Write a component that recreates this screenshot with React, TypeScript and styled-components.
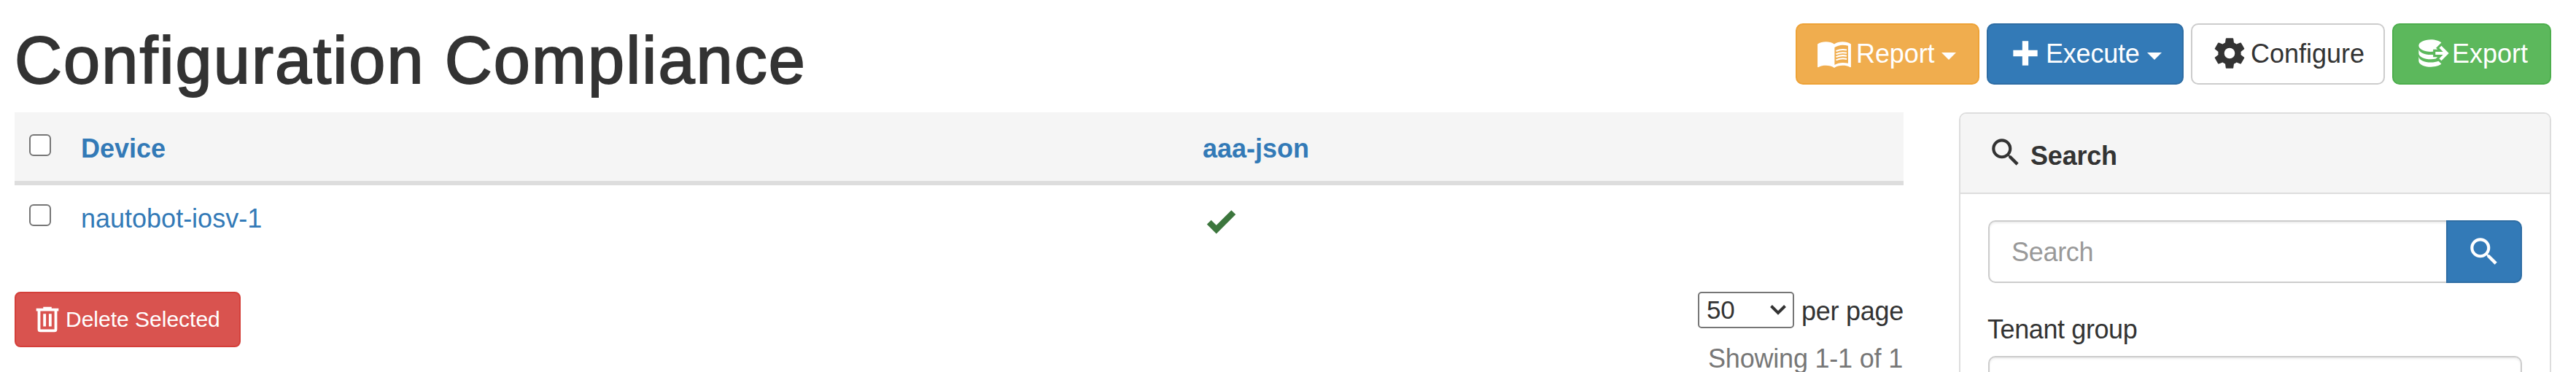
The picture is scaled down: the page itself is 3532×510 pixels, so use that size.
import React from "react";
import styled, { createGlobalStyle, css } from "styled-components";

const GlobalStyle = createGlobalStyle`
  *, *::before, *::after { box-sizing: border-box; }
  html, body { margin: 0; background: #fff; overflow: hidden; }
  body {
    font-family: "Liberation Sans", Arial, sans-serif;
    font-size: 36px;
    line-height: 52px;
    color: #333;
  }
`;

const paths = {
  check: "M9,20.42L2.79,14.21L5.62,11.38L9,14.77L18.88,4.88L21.71,7.71L9,20.42Z",
  plus: "M20 14H14V20H10V14H4V10H10V4H14V10H20V14Z",
  cog: "M12,15.5A3.5,3.5 0 0,1 8.5,12A3.5,3.5 0 0,1 12,8.5A3.5,3.5 0 0,1 15.5,12A3.5,3.5 0 0,1 12,15.5M19.43,12.97C19.47,12.65 19.5,12.33 19.5,12C19.5,11.67 19.47,11.34 19.43,11L21.54,9.37C21.73,9.22 21.78,8.95 21.66,8.73L19.66,5.27C19.54,5.05 19.27,4.96 19.05,5.05L16.56,6.05C16.04,5.66 15.5,5.32 14.87,5.07L14.5,2.42C14.46,2.18 14.25,2 14,2H10C9.75,2 9.54,2.18 9.5,2.42L9.13,5.07C8.5,5.32 7.96,5.66 7.44,6.05L4.95,5.05C4.73,4.96 4.46,5.05 4.34,5.27L2.34,8.73C2.21,8.95 2.27,9.22 2.46,9.37L4.57,11C4.53,11.34 4.5,11.67 4.5,12C4.5,12.33 4.53,12.65 4.57,12.97L2.46,14.63C2.27,14.78 2.21,15.05 2.34,15.27L4.34,18.73C4.46,18.95 4.73,19.03 4.95,18.95L7.44,17.94C7.96,18.34 8.5,18.68 9.13,18.93L9.5,21.58C9.54,21.82 9.75,22 10,22H14C14.25,22 14.46,21.82 14.5,21.58L14.87,18.93C15.5,18.67 16.04,18.34 16.56,17.94L19.05,18.95C19.27,19.03 19.54,18.95 19.66,18.73L21.66,15.27C21.78,15.05 21.73,14.78 21.54,14.63L19.43,12.97Z",
  magnify: "M9.5,3A6.5,6.5 0 0,1 16,9.5C16,11.11 15.41,12.59 14.44,13.73L14.71,14H15.5L20.5,19L19,20.5L14,15.5V14.71L13.73,14.44C12.59,15.41 11.11,16 9.5,16A6.5,6.5 0 0,1 3,9.5A6.5,6.5 0 0,1 9.5,3M9.5,5C7,5 5,7 5,9.5C5,12 7,14 9.5,14C12,14 14,12 14,9.5C14,7 12,5 9.5,5Z",
  trash: "M9,3V4H4V6H5V19A2,2 0 0,0 7,21H17A2,2 0 0,0 19,19V6H20V4H15V3H9M7,6H17V19H7V6M9,8V17H11V8H9M13,8V17H15V8H13Z",
  databaseExport: "M12,3C7.58,3 4,4.79 4,7C4,9.21 7.58,11 12,11C12.5,11 13,10.97 13.5,10.92V9.5H16.39L15.39,8.5L18.9,5C17.5,3.8 14.94,3 12,3M18.92,7.08L17.5,8.5L20,11H15V13H20L17.5,15.5L18.92,16.92L23.84,12M4,9V12C4,14.21 7.58,16 12,16C13.17,16 14.26,15.85 15.25,15.63L16.38,14.5H13.5V12.92C13,12.97 12.5,13 12,13C7.58,13 4,11.21 4,9M4,14V17C4,19.21 7.58,21 12,21C14.94,21 17.5,20.2 18.9,19L17,17.1C15.61,17.66 13.9,18 12,18C7.58,18 4,16.21 4,14Z",
};

const Svg = styled.svg<{ $size: number; $lift?: number }>`
  display: block;
  flex: none;
  width: ${(p) => p.$size}px;
  height: ${(p) => p.$size}px;
  margin-bottom: ${(p) => p.$lift ?? 0}px;
  fill: currentColor;
`;

type IconProps = { name: keyof typeof paths; size?: number; lift?: number };

function Icon({ name, size = 50, lift }: IconProps) {
  return (
    <Svg viewBox="0 0 24 24" $size={size} $lift={lift} aria-hidden="true">
      <path d={paths[name]} />
    </Svg>
  );
}

function BookIcon() {
  return (
    <Svg viewBox="0 0 24 24" $size={50} aria-hidden="true">
      <path
        fillRule="evenodd"
        d="M1 5.5C2.5 4.4 4.5 4 6.5 4C8.5 4 10.6 4.4 12 5.5C13.4 4.4 15.5 4 17.5 4C19.5 4 21.5 4.4 23 5.5V20.4C23 20.6 22.8 20.8 22.5 20.7C21 19.9 19.3 19.6 17.5 19.6C15.5 19.6 13.4 20 12 21.1C10.6 20 8.5 19.6 6.5 19.6C4.7 19.6 3 19.9 1.5 20.7C1.2 20.8 1 20.6 1 20.4ZM12.2 7.7V19.2C13.7 18.2 15.7 17.7 17.5 17.7C18.8 17.7 20 17.8 21.1 18.1V6.6C20 6.3 18.8 6.1 17.5 6.1C15.7 6.1 13.7 6.7 12.2 7.7Z"
      />
      <path
        fill="none"
        stroke="currentColor"
        strokeWidth="1"
        d="M13.2 10.1C15.2 9.2 17.9 8.9 20.2 9.4M13.2 12.1C15.2 11.2 17.9 10.9 20.2 11.4M13.2 14C15.2 13.1 17.9 12.8 20.2 13.3M13.2 16C15.2 15.1 17.9 14.8 20.2 15.3"
      />
    </Svg>
  );
}

const Page = styled.div`
  width: 3532px;
  height: 510px;
  overflow: hidden;
  padding: 0 34px 0 20px;
`;

const Header = styled.header`
  display: flex;
  justify-content: space-between;
  align-items: flex-start;
  height: 154px;
`;

const Title = styled.h1`
  margin: 32px 0 0;
  font-size: 90px;
  line-height: 102px;
  font-weight: 500;
  white-space: nowrap;
  letter-spacing: 2.1px;
  -webkit-text-stroke: 2px #333;
`;

const Toolbar = styled.div`
  display: flex;
  gap: 10px;
  padding-top: 32px;
`;

const tones = {
  warning: css`background: #f0ad4e; border-color: #eea236; color: #fff;`,
  primary: css`background: #337ab7; border-color: #2e6da4; color: #fff;`,
  plain: css`background: #fff; border-color: #ccc; color: #333;`,
  success: css`background: #5cb85c; border-color: #4cae4c; color: #fff;`,
  danger: css`background: #d9534f; border-color: #d43f3a; color: #fff;`,
};

const Button = styled.button<{ $tone: keyof typeof tones; $width: number }>`
  display: flex;
  align-items: center;
  width: ${(p) => p.$width}px;
  height: 84px;
  padding: 0 0 0 26px;
  border: 2px solid;
  border-radius: 10px;
  font: inherit;
  white-space: nowrap;
  ${(p) => tones[p.$tone]}
`;

const DeleteButton = styled(Button)`
  height: 76px;
  padding-left: 20px;
  border-radius: 8px;
  font-size: 30px;
`;

const Label = styled.span<{ $gap?: number; $drop?: number; $tracking?: number }>`
  margin-left: ${(p) => p.$gap ?? 0}px;
  margin-top: ${(p) => p.$drop ?? 0}px;
  letter-spacing: ${(p) => p.$tracking ?? 0}px;
`;

const Caret = styled.span`
  margin: 6px 0 0 10px;
  border-top: 10px solid;
  border-left: 10px solid transparent;
  border-right: 10px solid transparent;
`;

const Columns = styled.div`
  display: grid;
  grid-template-columns: 2590px 812px;
  gap: 76px;
`;

const Row = styled.div<{ $head?: boolean }>`
  display: grid;
  grid-template-columns: 91px 1538px 1fr;
  height: ${(p) => (p.$head ? 100 : 96)}px;
  padding-top: ${(p) => (p.$head ? 24 : 20)}px;
  font-weight: ${(p) => (p.$head ? 700 : 400)};
  ${(p) => p.$head && css`background: #f5f5f5; border-bottom: 6px solid #ddd;`}
`;

const Checkbox = styled.input.attrs({ type: "checkbox" })`
  appearance: none;
  width: 30px;
  height: 30px;
  margin: 6px 0 0 20px;
  border: 2px solid #767676;
  border-radius: 6px;
  background: #fff;
`;

const Link = styled.a`
  color: #337ab7;
  text-decoration: none;
`;

const Status = styled.span`
  padding-top: 4px;
  color: #3c763d;
`;

const Footer = styled.div`
  display: flex;
  justify-content: space-between;
  margin-top: 50px;
`;

const Paging = styled.div`
  display: flex;
  flex-direction: column;
  align-items: flex-end;
`;

const PageSize = styled.label`
  display: flex;
  align-items: center;
  height: 50px;
  white-space: nowrap;
`;

const SizeBox = styled.span`
  display: flex;
  align-items: center;
  justify-content: space-between;
  width: 132px;
  height: 50px;
  padding: 0 9px 0 10px;
  border: 2px solid #767676;
  border-radius: 5px;
  font-size: 35px;
`;

const Showing = styled.div`
  margin: 16px 1px 0 0;
  color: #777;
  white-space: nowrap;
  letter-spacing: -0.2px;
`;

const Panel = styled.aside`
  height: 500px;
  border: 2px solid #ddd;
  border-radius: 10px;
  overflow: hidden;
`;

const PanelHead = styled.div`
  display: flex;
  align-items: center;
  height: 110px;
  padding: 0 38px 2px 37px;
  background: #f5f5f5;
  border-bottom: 2px solid #ddd;
  font-weight: 700;
`;

const PanelBody = styled.div`
  padding: 36px 38px;
`;

const SearchGroup = styled.div`
  display: flex;
  height: 86px;
`;

const field = css`
  border: 2px solid #ccc;
  box-shadow: inset 0 2px 3px rgba(0, 0, 0, 0.075);
  background: #fff;
`;

const SearchInput = styled.input`
  flex: 1;
  min-width: 0;
  padding: 2px 30px 0;
  border-radius: 10px 0 0 10px;
  font: inherit;
  letter-spacing: -0.3px;
  ${field}
  border-right: 0;
  &::placeholder { color: #999; opacity: 1; }
`;

const SearchButton = styled.button`
  display: flex;
  align-items: center;
  justify-content: center;
  width: 104px;
  padding: 0;
  border: 2px solid #2e6da4;
  border-radius: 0 10px 10px 0;
  background: #337ab7;
  color: #fff;
`;

const FieldLabel = styled.div`
  margin: 38px 0 10px -1px;
  letter-spacing: -0.4px;
`;

const SelectBox = styled.div`
  height: 86px;
  border-radius: 10px;
  ${field}
`;

export default function App() {
  return (
    <Page>
      <GlobalStyle />
      <Header>
        <Title>Configuration Compliance</Title>
        <Toolbar>
          <Button $tone="warning" $width={252}>
            <BookIcon />
            <Label $gap={5} $tracking={-0.1}>Report</Label>
            <Caret />
          </Button>
          <Button $tone="primary" $width={270}>
            <Icon name="plus" lift={2} />
            <Label $gap={3} $tracking={-0.2}>Execute</Label>
            <Caret />
          </Button>
          <Button $tone="plain" $width={266}>
            <Icon name="cog" lift={2} />
            <Label $gap={4}>Configure</Label>
          </Button>
          <Button $tone="success" $width={218}>
            <Icon name="databaseExport" lift={2} />
            <Label $gap={4}>Export</Label>
          </Button>
        </Toolbar>
      </Header>
      <Columns>
        <main>
          <Row $head>
            <Checkbox />
            <Link>Device</Link>
            <Link>aaa-json</Link>
          </Row>
          <Row>
            <Checkbox />
            <Link>nautobot-iosv-1</Link>
            <Status><Icon name="check" /></Status>
          </Row>
          <Footer>
            <DeleteButton $tone="danger" $width={310}>
              <Icon name="trash" size={46} />
              <Label $gap={2}>Delete Selected</Label>
            </DeleteButton>
            <Paging>
              <PageSize>
                <SizeBox>
                  50
                  <svg width="22" height="14" viewBox="0 0 22 14" fill="none" stroke="#333" strokeWidth="4">
                    <path d="M1.5 1.5L11 11L20.5 1.5" />
                  </svg>
                </SizeBox>
                <Label $gap={10} $drop={3} $tracking={-0.25}>per page</Label>
              </PageSize>
              <Showing>Showing 1-1 of 1</Showing>
            </Paging>
          </Footer>
        </main>
        <Panel>
          <PanelHead>
            <Icon name="magnify" />
            <Label $gap={9} $drop={9} $tracking={-0.2}>Search</Label>
          </PanelHead>
          <PanelBody>
            <SearchGroup>
              <SearchInput placeholder="Search" />
              <SearchButton aria-label="Search"><Icon name="magnify" /></SearchButton>
            </SearchGroup>
            <FieldLabel>Tenant group</FieldLabel>
            <SelectBox />
          </PanelBody>
        </Panel>
      </Columns>
    </Page>
  );
}
